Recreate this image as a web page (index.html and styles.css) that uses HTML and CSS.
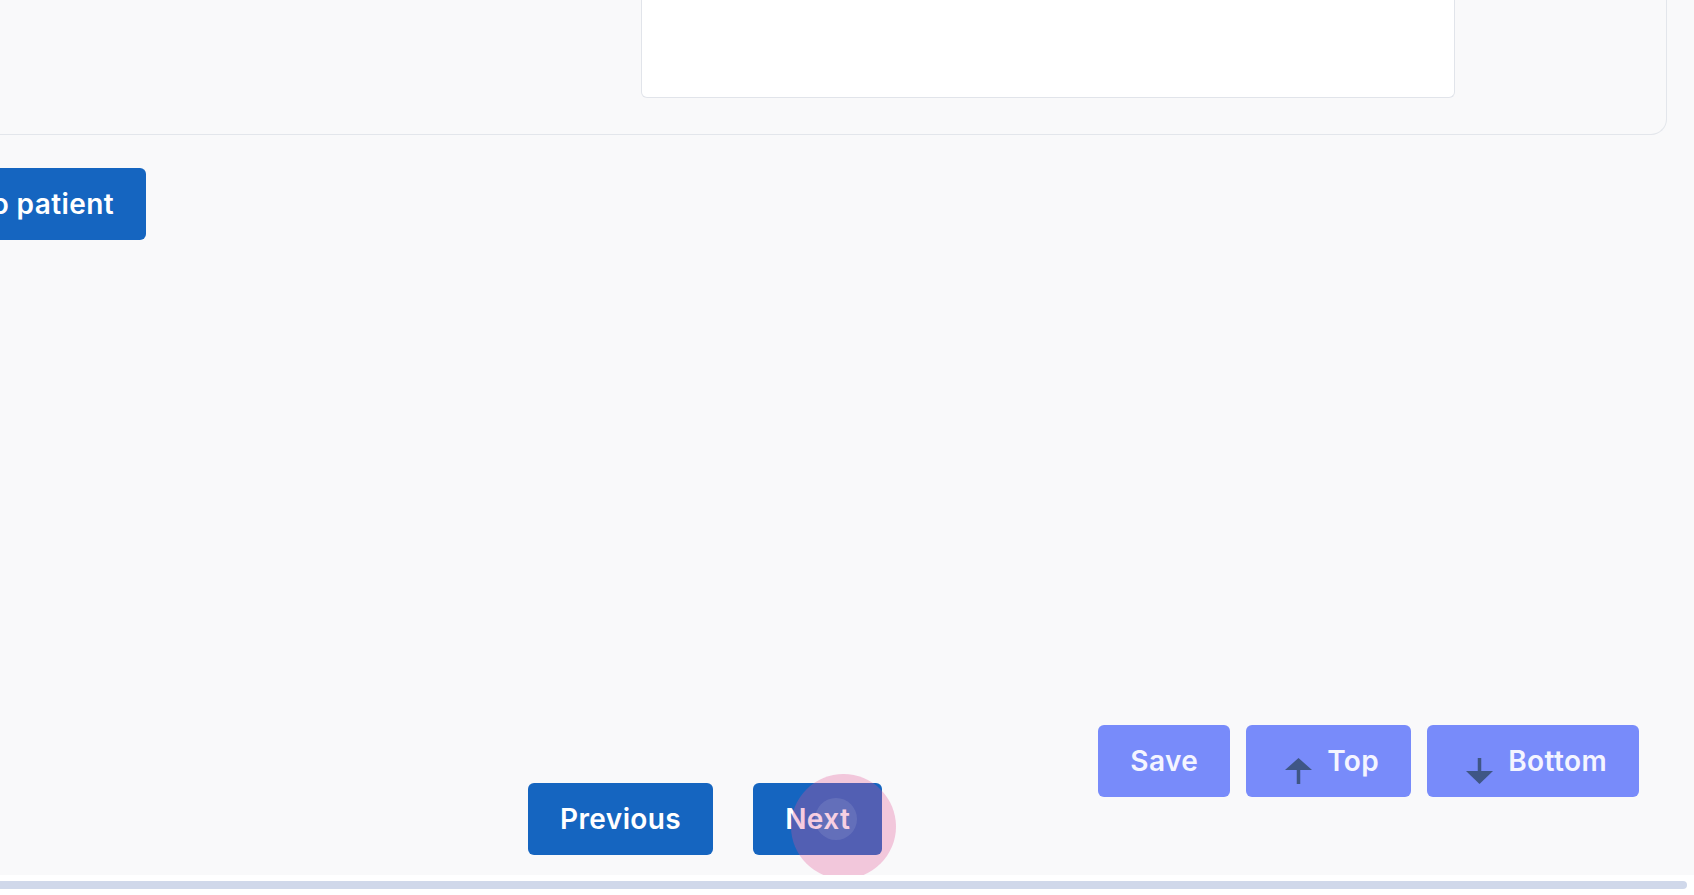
FILE: index.html
```html
<!DOCTYPE html>
<html lang="en">
<head>
    <meta charset="UTF-8">
    <meta name="viewport" content="width=device-width, initial-scale=1.0">
    <title>Patient record</title>
    <link rel="stylesheet" href="styles.css">
</head>
<body>
    <div class="screen">
        <div class="content">
            <div class="card">
                <div class="editor"></div>
            </div>

            <div class="patient-row">
                <button class="btn btn-primary">Go to patient</button>
            </div>

            <div class="footer">
                <div class="nav">
                    <button class="btn btn-primary">Previous</button>
                    <div class="click-wrap">
                        <button class="btn btn-primary">Next</button>
                        <span class="click-dot"></span>
                    </div>
                </div>

                <div class="tools">
                    <button class="btn btn-tool">Save</button>
                    <button class="btn btn-tool btn-icon">
                        <svg class="arrow" width="27" height="26" viewBox="0 0 27 26">
                            <polygon points="0,12 13.5,0 27,12" />
                            <rect x="11.75" y="11" width="3.5" height="15" />
                        </svg>
                        Top
                    </button>
                    <button class="btn btn-tool btn-icon">
                        <svg class="arrow" width="27" height="26" viewBox="0 0 27 26">
                            <rect x="11.75" y="0" width="3.5" height="14" />
                            <polygon points="0,13 27,13 13.5,26" />
                        </svg>
                        Bottom
                    </button>
                </div>
            </div>
        </div>

        <div class="hscroll">
            <div class="hscroll-thumb"></div>
        </div>
    </div>
</body>
</html>
```

FILE: styles.css
```css
body {
    margin: 0;
    font-family: Inter, "Noto Sans", sans-serif;
    background-color: #f9f9fa;
    color: #333;
    overflow: hidden;
}

.screen {
    display: flex;
    flex-direction: column;
    height: 100vh;
}

.content {
    flex: 1;
    display: flex;
    flex-direction: column;
    overflow: hidden;
}

/* card that is scrolled partly out of view */
.card {
    margin: -98px 27px 0 -20px;
    padding: 0 211px 36px 660px;
    border: 1px solid #e3e6eb;
    border-top: none;
    border-radius: 0 0 16px 16px;
}

.editor {
    height: 196px;
    background: #fff;
    border: 1px solid #e1e4ea;
    border-top: none;
    border-radius: 0 0 6px 6px;
    box-sizing: border-box;
}

.patient-row {
    width: 146px;
    margin-top: 33px;
    display: flex;
    justify-content: flex-end;
}

.btn {
    flex-shrink: 0;
    border: none;
    border-radius: 6px;
    padding: 19px 32px;
    font-family: inherit;
    font-size: 28px;
    font-weight: 600;
    line-height: 34px;
    letter-spacing: 0.4px;
    white-space: nowrap;
    cursor: pointer;
}

.btn-primary {
    background-color: #1565c0;
    color: #fff;
}

.btn-tool {
    background-color: #788bfa;
    color: #f4f5ff;
}

.btn-icon {
    display: inline-flex;
    align-items: center;
    gap: 15px;
}

.arrow {
    margin: 10px 0 -10px 7px;
    fill: #3f5685;
}

.footer {
    margin-top: auto;
    display: flex;
    justify-content: space-between;
    padding: 0 55px 20px 528px;
}

.nav {
    align-self: flex-end;
    display: flex;
    gap: 40px;
}

.tools {
    align-self: flex-start;
    display: flex;
    gap: 16px;
    margin-bottom: 58px;
}

.click-wrap {
    position: relative;
}

/* click marker of the screen recorder */
.click-dot {
    position: absolute;
    left: 38px;
    top: -9px;
    width: 105px;
    height: 105px;
    border-radius: 50%;
    background: rgba(226, 84, 148, 0.3);
    pointer-events: none;
}

.click-dot::after {
    content: "";
    position: absolute;
    left: 24px;
    top: 24px;
    width: 42px;
    height: 42px;
    border-radius: 50%;
    background: rgba(255, 255, 255, 0.1);
}

.hscroll {
    height: 20px;
    background: #fff;
    padding-top: 6px;
    box-sizing: border-box;
}

.hscroll-thumb {
    width: 1687px;
    height: 8px;
    background: #d0d8ea;
    border-radius: 0 4px 4px 0;
}
```
